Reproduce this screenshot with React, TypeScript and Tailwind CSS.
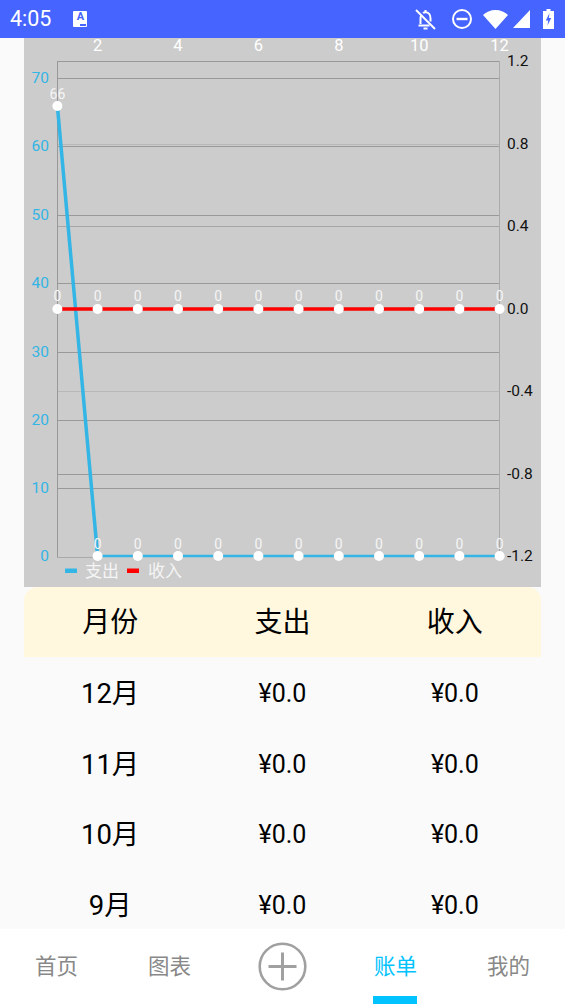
const font = "font-['Roboto','Noto_Sans_CJK_SC',sans-serif]";

const xs = Array.from({ length: 12 }, (_, i) => 57.4 + i * 40.2);
const leftTicks = [
  [0, 556.5], [10, 488.5], [20, 420.5], [30, 352.5], [40, 283.5], [50, 215.5], [60, 146.5], [70, 78.5],
] as const;
const rightTicks = [
  ["1.2", 61.5], ["0.8", 144], ["0.4", 226], ["0.0", 309], ["-0.4", 391.5], ["-0.8", 474], ["-1.2", 556.5],
] as const;

function Chart() {
  return (
    <svg viewBox="24 38 517 548" className="block w-[517px] h-[548px] overflow-visible">
      {leftTicks.filter(([v]) => v !== 0).map(([v, y]) => (
        <line key={v} x1={57} x2={499} y1={y} y2={y} stroke="#999999" strokeWidth={1} />
      ))}
      <line x1={57} x2={499} y1={61.5} y2={61.5} stroke="#999999" />
      <line x1={57} x2={499} y1={474.5} y2={474.5} stroke="#999999" />
      <line x1={57} x2={499} y1={226.5} y2={226.5} stroke="#a6a6a6" />
      <line x1={57} x2={499} y1={144.5} y2={144.5} stroke="#b8b8b8" />
      <line x1={57} x2={499} y1={391.5} y2={391.5} stroke="#b8b8b8" />
      <line x1={57.5} x2={57.5} y1={61} y2={557} stroke="#999999" />
      <line x1={499.5} x2={499.5} y1={61} y2={557} stroke="#aaaaaa" />
      <line x1={57} x2={97} y1={557.5} y2={557.5} stroke="#aaaaaa" />

      {[2, 4, 6, 8, 10, 12].map((n) => (
        <text key={n} x={xs[n - 1]} y={51} textAnchor="middle" fontSize={16.5} fill="#ffffff">{n}</text>
      ))}
      {leftTicks.map(([v, y]) => (
        <text key={v} x={49} y={y + 4.5} textAnchor="end" fontSize={15.5} fill="#33b5e5">{v}</text>
      ))}
      {rightTicks.map(([t, y]) => (
        <text key={t} x={507} y={y + 4.5} fontSize={15.5} fill="#111111">{t}</text>
      ))}

      <line x1={xs[0]} y1={106} x2={xs[1]} y2={556} stroke="#33b5e5" strokeWidth={3.5} />
      <line x1={xs[1]} y1={556} x2={xs[11]} y2={556} stroke="#33b5e5" strokeWidth={2.5} />
      <line x1={57} x2={499.5} y1={309} y2={309} stroke="#ff0000" strokeWidth={3.5} />
      {xs.map((x, i) => (
        <g key={i}>
          <circle cx={x} cy={309} r={5} fill="#ffffff" />
          <text x={x} y={301} textAnchor="middle" fontSize={14} fill="#f5f5f5">0</text>
          <circle cx={x} cy={i === 0 ? 106 : 556} r={5} fill="#ffffff" />
          <text x={x} y={i === 0 ? 98.500 : 549} textAnchor="middle" fontSize={14} fill="#f5f5f5">
            {i === 0 ? 66 : 0}
          </text>
        </g>
      ))}

      <rect x={65} y={568.500} width={12} height={4.500} fill="#33b5e5" />
      <text x={85} y={577} fontSize={17} fill="#f5f5f5">支出</text>
      <rect x={127} y={568.500} width={12} height={4.500} fill="#ff0000" />
      <text x={148} y={577} fontSize={17} fill="#f5f5f5">收入</text>
    </svg>
  );
}

function Row({ m }: { m: string }) {
  return (
    <div className="grid grid-cols-3 h-[70.500px] pt-[3px] items-center text-center text-[25px] text-black">
      <span className="text-[27.500px]">{m}</span>
      <span>¥0.0</span>
      <span>¥0.0</span>
    </div>
  );
}

function StatusIcons() {
  return (
    <div className="flex items-center text-white pr-[11px]">
      <svg width="21" height="21" viewBox="0 0 21 21" className="mr-[16px]" fill="none" stroke="white" strokeWidth="2">
        <path d="M5.500 15V9.500c0-1 .2-2 .6-2.800M8 4c.7-.5 1.500-.8 2.500-.8 3 0 5 2.500 5 6v3.300" />
        <path d="M3.500 16.500h11" />
        <path d="M1 1 20 20" />
        <path d="M8.500 19.500h4" />
        <path d="M10.500 1v2" />
      </svg>
      <svg width="20" height="20" viewBox="0 0 20 20" className="mr-[11px]" fill="none" stroke="white" strokeWidth="2">
        <circle cx="10" cy="10" r="9" />
        <path d="M4.500 10h11" strokeWidth="2.400" />
      </svg>
      <svg width="25" height="19" viewBox="0 0 25 19" className="mr-[5px]">
        <path d="M0 5C3 2 7.500 0 12.500 0s9.500 2 12.500 5L12.500 19Z" fill="white" />
      </svg>
      <svg width="17" height="18" viewBox="0 0 17 18" className="mr-[13px]">
        <path d="M17 0v18H0Z" fill="white" />
      </svg>
      <svg width="11" height="20" viewBox="0 0 11 20">
        <path d="M3.500 0h4v2H11v18H0V2h3.500Z" fill="white" />
        <path d="M6.500 4 2.800 11.500h2.400L4.500 16.500 8.200 9H5.800Z" fill="#4664ff" />
      </svg>
    </div>
  );
}

export default function App() {
  return (
    <div className={`${font} relative w-[565px] h-[1004px] flex flex-col bg-[#fafafa] overflow-hidden`}>
      <div className="relative z-10 h-[38px] shrink-0 bg-[#4664ff] flex items-center justify-between pl-[10px]">
        <div className="flex items-center">
          <span className="text-white text-[21.500px] leading-none">4:05</span>
          <div className="relative ml-[22px] w-[14px] h-[16px] bg-white rounded-[1px] flex items-start justify-center">
            <span className="text-[#4664ff] text-[11px] font-bold leading-[12px]">A</span>
            <div className="absolute right-[1px] bottom-[1px] w-[6px] h-[2px] bg-[#4664ff]" />
          </div>
        </div>
        <StatusIcons />
      </div>

      <div className="flex-1 min-h-0 px-6">
        <div className="h-[548.500px] bg-[#cccccc]">
          <Chart />
        </div>
        <div className="grid grid-cols-3 h-[70.500px] pt-[3px] items-center text-center text-[28px] text-black bg-[#fff7de] rounded-t-[14px]">
          <span>月份</span>
          <span>支出</span>
          <span>收入</span>
        </div>
        <Row m="12月" />
        <Row m="11月" />
        <Row m="10月" />
        <Row m="9月" />
      </div>

      <div className="relative z-10 h-[75px] shrink-0 bg-white grid grid-cols-5 items-center text-[21.500px] text-[#888888]">
        <span className="text-center pt-[1px]">首页</span>
        <span className="text-center pt-[1px]">图表</span>
        <div className="flex justify-center -mt-[1px]">
          <svg width="49" height="49" viewBox="0 0 49 49" fill="none" stroke="#a0a0a0" className="-ml-[1px]">
            <circle cx="24.500" cy="24.500" r="22.800" strokeWidth="2.600" />
            <path d="M10.500 24.500h28M24.500 10.500v28" strokeWidth="3" />
          </svg>
        </div>
        <div className="relative h-full flex items-center justify-center text-[#00c3ff]">
          <span className="pt-[1px]">账单</span>
          <div className="absolute bottom-0 left-[34px] w-[44px] h-[8px] bg-[#00c3ff]" />
        </div>
        <span className="text-center pt-[1px]">我的</span>
      </div>
    </div>
  );
}
